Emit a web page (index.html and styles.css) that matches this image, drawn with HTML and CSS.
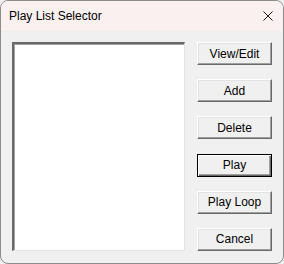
FILE: index.html
```html
<!DOCTYPE html>
<html lang="en">
<head>
    <meta charset="UTF-8">
    <title>Play List Selector</title>
    <link rel="stylesheet" href="styles.css">
</head>
<body>
    <div class="window">
        <div class="title-bar">
            <span class="title">Play List Selector</span>
            <svg class="close" width="10" height="10" viewBox="0 0 10 10">
                <path d="M0.5 0.5 L9.5 9.5 M9.5 0.5 L0.5 9.5" stroke="#1a1a1a" stroke-width="1" fill="none"/>
            </svg>
        </div>
        <div class="content">
            <div class="list-box"></div>
            <div class="buttons">
                <button class="btn">View/Edit</button>
                <button class="btn">Add</button>
                <button class="btn">Delete</button>
                <button class="btn default">Play</button>
                <button class="btn">Play Loop</button>
                <button class="btn">Cancel</button>
            </div>
        </div>
    </div>
</body>
</html>
```

FILE: styles.css
```css
:root {
    --face: #f0f0f0;
    --light: #e3e3e3;
    --shadow: #a0a0a0;
    --dark-shadow: #696969;
}

body {
    margin: 0;
    background-color: var(--face);
}

.window {
    width: 284px;
    height: 264px;
    box-sizing: border-box;
    border: 1px solid #8c8c8c;
    border-radius: 8px;
    overflow: hidden;
    background-color: var(--face);
}

.title-bar {
    height: 30px;
    background-color: #faf0f0;
    display: flex;
    align-items: center;
    justify-content: space-between;
    padding: 0 10px 0 8px;
}

.title {
    font-family: "Liberation Sans", Arial, sans-serif;
    font-size: 12px;
    color: #000;
    padding-bottom: 1px;
}

.close {
    display: block;
    margin-bottom: 1px;
}

.content {
    display: flex;
    gap: 12px;
    padding: 11px 10px 0 11px;
}

.list-box {
    width: 173px;
    height: 209px;
    box-sizing: border-box;
    background-color: #fff;
    border-style: solid;
    border-width: 2px 1px 1px 2px;
    border-color: var(--dark-shadow) var(--light) var(--light) var(--dark-shadow);
    box-shadow: inset 1px 1px 0 var(--shadow);
}

.buttons {
    display: flex;
    flex-direction: column;
    justify-content: space-between;
    height: 209px;
}

.btn {
    width: 75px;
    height: 23px;
    box-sizing: border-box;
    padding: 0;
    font-family: "Liberation Sans", Arial, sans-serif;
    font-size: 12px;
    color: #000;
    background-color: var(--face);
    border-style: solid;
    border-width: 1px;
    border-color: #fff var(--dark-shadow) var(--dark-shadow) #fff;
    box-shadow: inset -1px -1px 0 var(--shadow), inset 1px 1px 0 var(--light);
}

.btn.default {
    border-color: #000;
    box-shadow: inset 1px 1px 0 #fff, inset -1px -1px 0 var(--dark-shadow), inset -2px -2px 0 var(--shadow);
}
```
